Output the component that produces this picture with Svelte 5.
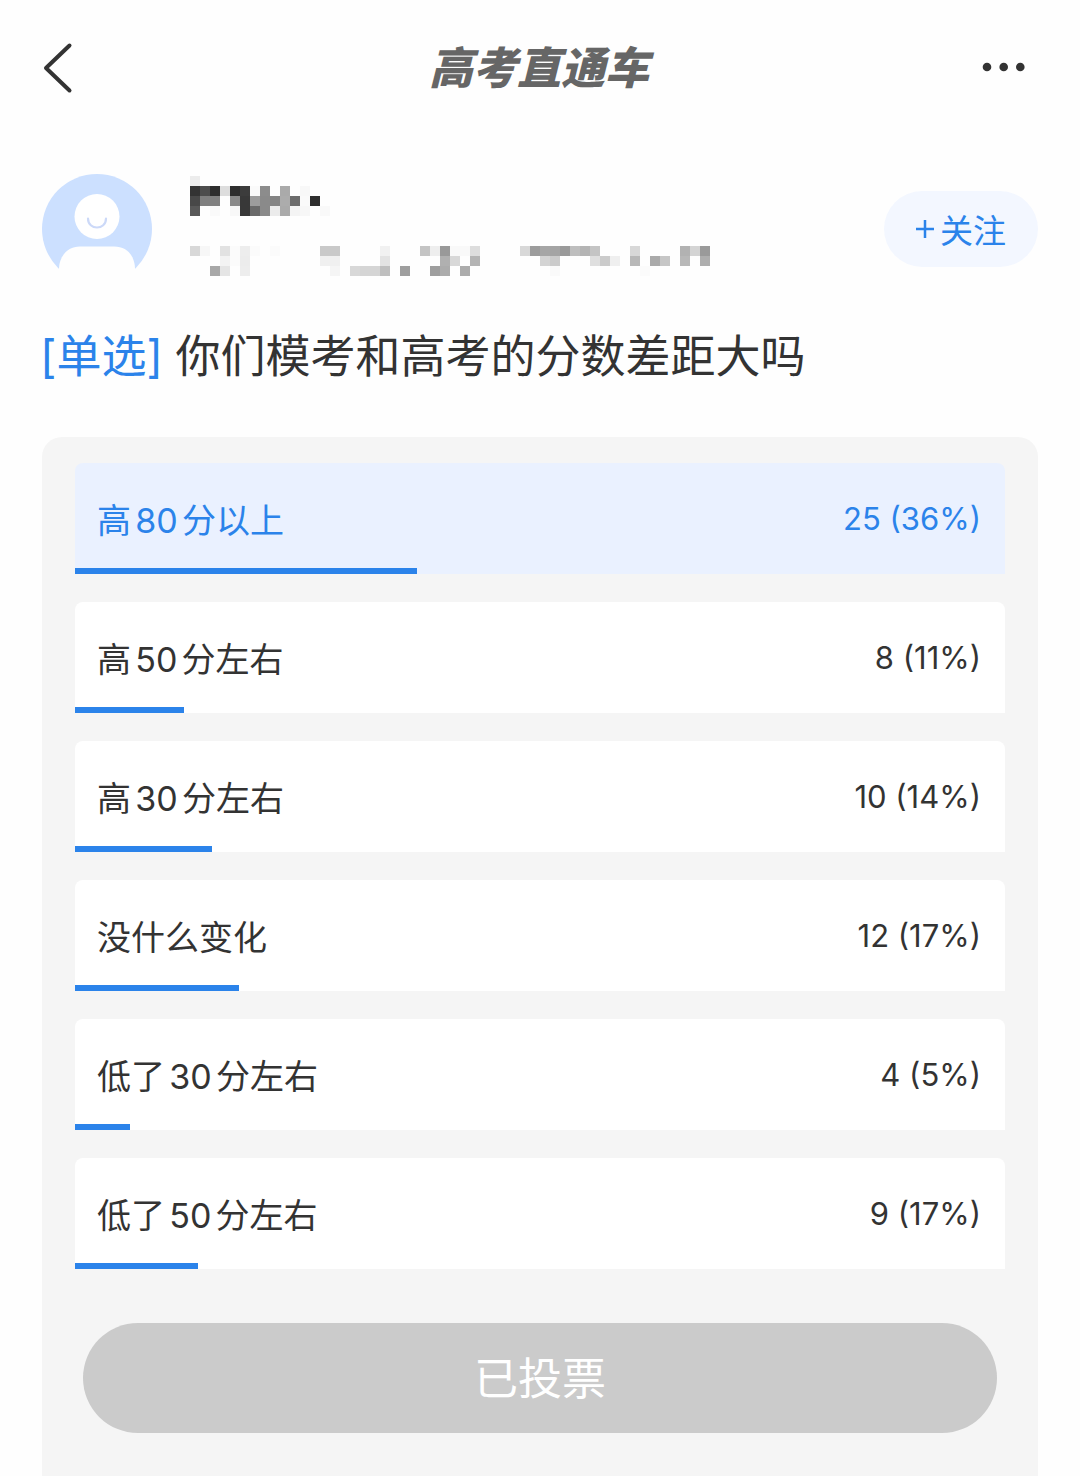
<script lang="ts">
  interface Option {
    label: string;
    votes: number;
    percent: number;
  }

  // one block per entry: column, row, grey level
  type Block = [number, number, string];

  const options: Option[] = [
    { label: '高80分以上', votes: 25, percent: 36 },
    { label: '高50分左右', votes: 8, percent: 11 },
    { label: '高30分左右', votes: 10, percent: 14 },
    { label: '没什么变化', votes: 12, percent: 17 },
    { label: '低了30分左右', votes: 4, percent: 5 },
    { label: '低了50分左右', votes: 9, percent: 17 }
  ];

  const nameBlocks: Block[] = [
    [0, 0, 'ec'],
    [0, 1, '33'], [1, 1, '4d'], [2, 1, '2e'], [3, 1, 'dd'], [4, 1, '2e'], [5, 1, '3c'], [6, 1, 'fa'],
    [7, 1, '8c'], [9, 1, 'aa'], [11, 1, 'f8'],
    [0, 2, '48'], [1, 2, '80'], [2, 2, '80'], [4, 2, '8a'], [5, 2, '38'], [6, 2, '9c'], [7, 2, '8a'],
    [8, 2, '84'], [9, 2, 'ac'], [10, 2, '6c'], [11, 2, 'fa'], [12, 2, '2e'],
    [0, 3, '58'], [2, 3, 'fa'], [4, 3, 'f8'], [5, 3, '38'], [6, 3, '6a'], [7, 3, '8a'], [8, 3, 'eb'],
    [9, 3, 'aa'], [10, 3, 'f4'], [11, 3, 'f7'], [13, 3, 'f9']
  ];

  const metaBlocks: Block[] = [
    [0, 0, 'd8'], [1, 0, 'f7'], [3, 0, 'e2'], [4, 0, 'fb'], [5, 0, 'ed'], [6, 0, 'fb'], [8, 0, 'fb'],
    [13, 0, 'c9'], [14, 0, 'c9'], [19, 0, 'f1'], [23, 0, 'c4'], [24, 0, 'ee'], [25, 0, '99'],
    [26, 0, 'f9'], [27, 0, 'f9'], [28, 0, 'dd'], [33, 0, 'd8'], [34, 0, '9c'], [35, 0, 'a6'],
    [36, 0, 'a4'], [37, 0, '9a'], [38, 0, 'be'], [39, 0, 'b4'], [40, 0, 'c4'], [44, 0, 'd8'],
    [49, 0, 'b2'], [50, 0, 'd4'], [51, 0, '9a'],
    [3, 1, 'f3'], [4, 1, 'fb'], [5, 1, 'ec'], [13, 1, 'f0'], [14, 1, 'f0'], [19, 1, 'e3'],
    [25, 1, 'b0'], [26, 1, 'd8'], [28, 1, 'b4'], [35, 1, 'd4'], [36, 1, 'cb'], [40, 1, 'df'],
    [41, 1, 'cb'], [42, 1, 'ef'], [44, 1, 'b8'], [46, 1, 'aa'], [47, 1, 'c6'], [49, 1, 'b8'],
    [51, 1, 'ae'],
    [2, 2, 'a8'], [3, 2, 'e5'], [5, 2, 'ed'], [14, 2, 'f5'], [16, 2, 'd8'], [17, 2, 'd5'],
    [18, 2, 'd5'], [19, 2, 'bf'], [21, 2, '9e'], [24, 2, '9e'], [25, 2, 'ac'], [27, 2, 'ac'],
    [36, 2, 'fa'], [45, 2, 'fb']
  ];

  const total = options.reduce((sum, o) => sum + o.votes, 0);
</script>

{#snippet mosaic(blocks: Block[], cols: number, rows: number)}
  <svg class="mosaic" width={cols * 10} height={rows * 10} shape-rendering="crispEdges" aria-hidden="true">
    {#each blocks as [col, row, g]}
      <rect x={col * 10} y={row * 10} width="10" height="10" fill="#{g}{g}{g}" />
    {/each}
  </svg>
{/snippet}

<div class="page">
  <header class="navbar">
    <button class="icon-btn" aria-label="返回">
      <svg width="32" height="56" viewBox="0 0 32 56" fill="none">
        <path d="M27.5 5.5 4 28l23.500 22.500" stroke="#333" stroke-width="4" stroke-linecap="round" stroke-linejoin="round" />
      </svg>
    </button>
    <h1>高考直通车</h1>
    <button class="icon-btn more" aria-label="更多">
      <svg width="44" height="12" viewBox="0 0 44 12" fill="#333">
        <circle cx="5" cy="5" r="4.300" />
        <circle cx="21.700" cy="5" r="4.300" />
        <circle cx="38.300" cy="5" r="4.300" />
      </svg>
    </button>
  </header>

  <section class="author">
    <svg class="avatar" width="112" height="112" viewBox="0 0 112 112" aria-hidden="true">
      <circle cx="55" cy="56" r="55" fill="#cce0ff" />
      <path d="M17 112V96c0-12 8-22.500 21-22.500h34c14 0 21 10.500 21 22.500v16z" fill="#fefefe" />
      <circle cx="55" cy="43.500" r="22.500" fill="#fff" />
      <path d="M46 45.500c0 12 18 12 18 0" fill="none" stroke="#ccd9f8" stroke-width="2.200" stroke-linecap="round" />
    </svg>
    <div class="info">
      {@render mosaic(nameBlocks, 14, 4)}
      {@render mosaic(metaBlocks, 52, 3)}
    </div>
    <button class="follow">
      <svg width="18" height="18" viewBox="0 0 18 18" aria-hidden="true">
        <path d="M9 0v18M0 9h18" stroke="currentColor" stroke-width="2.500" />
      </svg>
      <span>关注</span>
    </button>
  </section>

  <h2><span class="tag">[单选]</span> <span>你们模考和高考的分数差距大吗</span></h2>

  <section class="poll">
    <ul>
      {#each options as option, i}
        <li class:selected={i === 0}>
          <div class="row">
            <span class="label">{option.label}</span>
            <span class="count">{option.votes} ({option.percent}%)</span>
          </div>
          <div class="bar" style="width: {(option.votes / total) * 100}%"></div>
        </li>
      {/each}
    </ul>
    <button class="vote" disabled>已投票</button>
  </section>
</div>

<style>
  :global(body) {
    margin: 0;
    background: #fefefe;
  }

  .page {
    box-sizing: border-box;
    min-height: 100vh;
    padding: 0 42px 0 40px;
    display: flex;
    flex-direction: column;
    color: #333;
    font-family: Inter, 'Noto Sans CJK SC', sans-serif;
    font-weight: 380;
    text-autospace: normal;
  }

  button {
    border: none;
    padding: 0;
    font-family: inherit;
    font-weight: inherit;
    cursor: pointer;
  }

  .navbar {
    height: 136px;
    display: grid;
    grid-template-columns: 1fr auto 1fr;
    align-items: center;
  }

  .icon-btn {
    display: flex;
    align-items: center;
    height: 56px;
    padding-left: 2px;
    background: transparent;
  }

  .more {
    justify-self: end;
    padding-right: 12px;
  }

  h1 {
    margin: 0;
    font-size: 44px;
    line-height: 56px;
    font-weight: 900;
    font-style: italic;
    color: #666;
  }

  .author {
    display: flex;
    align-items: center;
    padding: 37px 0 0 2px;
  }

  .avatar {
    flex-shrink: 0;
  }

  .info {
    flex: 1;
    min-width: 0;
    display: flex;
    flex-direction: column;
    gap: 30px;
    padding: 0 0 6px 36px;
  }

  .mosaic {
    display: block;
  }

  .follow {
    display: flex;
    align-items: center;
    justify-content: center;
    gap: 6px;
    width: 154px;
    height: 76px;
    border-radius: 38px;
    background: #f3f7ff;
    color: #2b83ea;
    font-size: 33px;
  }

  h2 {
    margin: 42px 0 0;
    font-size: 45px;
    line-height: 60px;
    font-weight: inherit;
  }

  .tag {
    color: #2b83ea;
  }

  .poll {
    flex: 1;
    margin: 50px 0 0 2px;
    padding: 26px 33px 42px;
    border-radius: 20px 20px 0 0;
    background: #f5f5f5;
  }

  ul {
    margin: 0;
    padding: 0;
    list-style: none;
    display: flex;
    flex-direction: column;
    gap: 28px;
  }

  li {
    border-radius: 8px 8px 0 0;
    background: #fff;
  }

  .row {
    box-sizing: border-box;
    display: flex;
    align-items: center;
    justify-content: space-between;
    height: 105px;
    padding: 6px 24px 0 22px;
    font-size: 34px;
  }

  .count {
    font-size: 31px;
  }

  .bar {
    height: 6px;
    background: #2b83ea;
  }

  .selected {
    background: #eaf1ff;
  }

  .selected .row {
    color: #2b83ea;
  }

  .vote {
    display: block;
    width: calc(100% - 16px);
    height: 110px;
    margin: 54px auto 0;
    padding-bottom: 4px;
    border-radius: 55px;
    background: #cbcbcb;
    color: #fff;
    font-size: 44px;
    cursor: default;
  }
</style>
